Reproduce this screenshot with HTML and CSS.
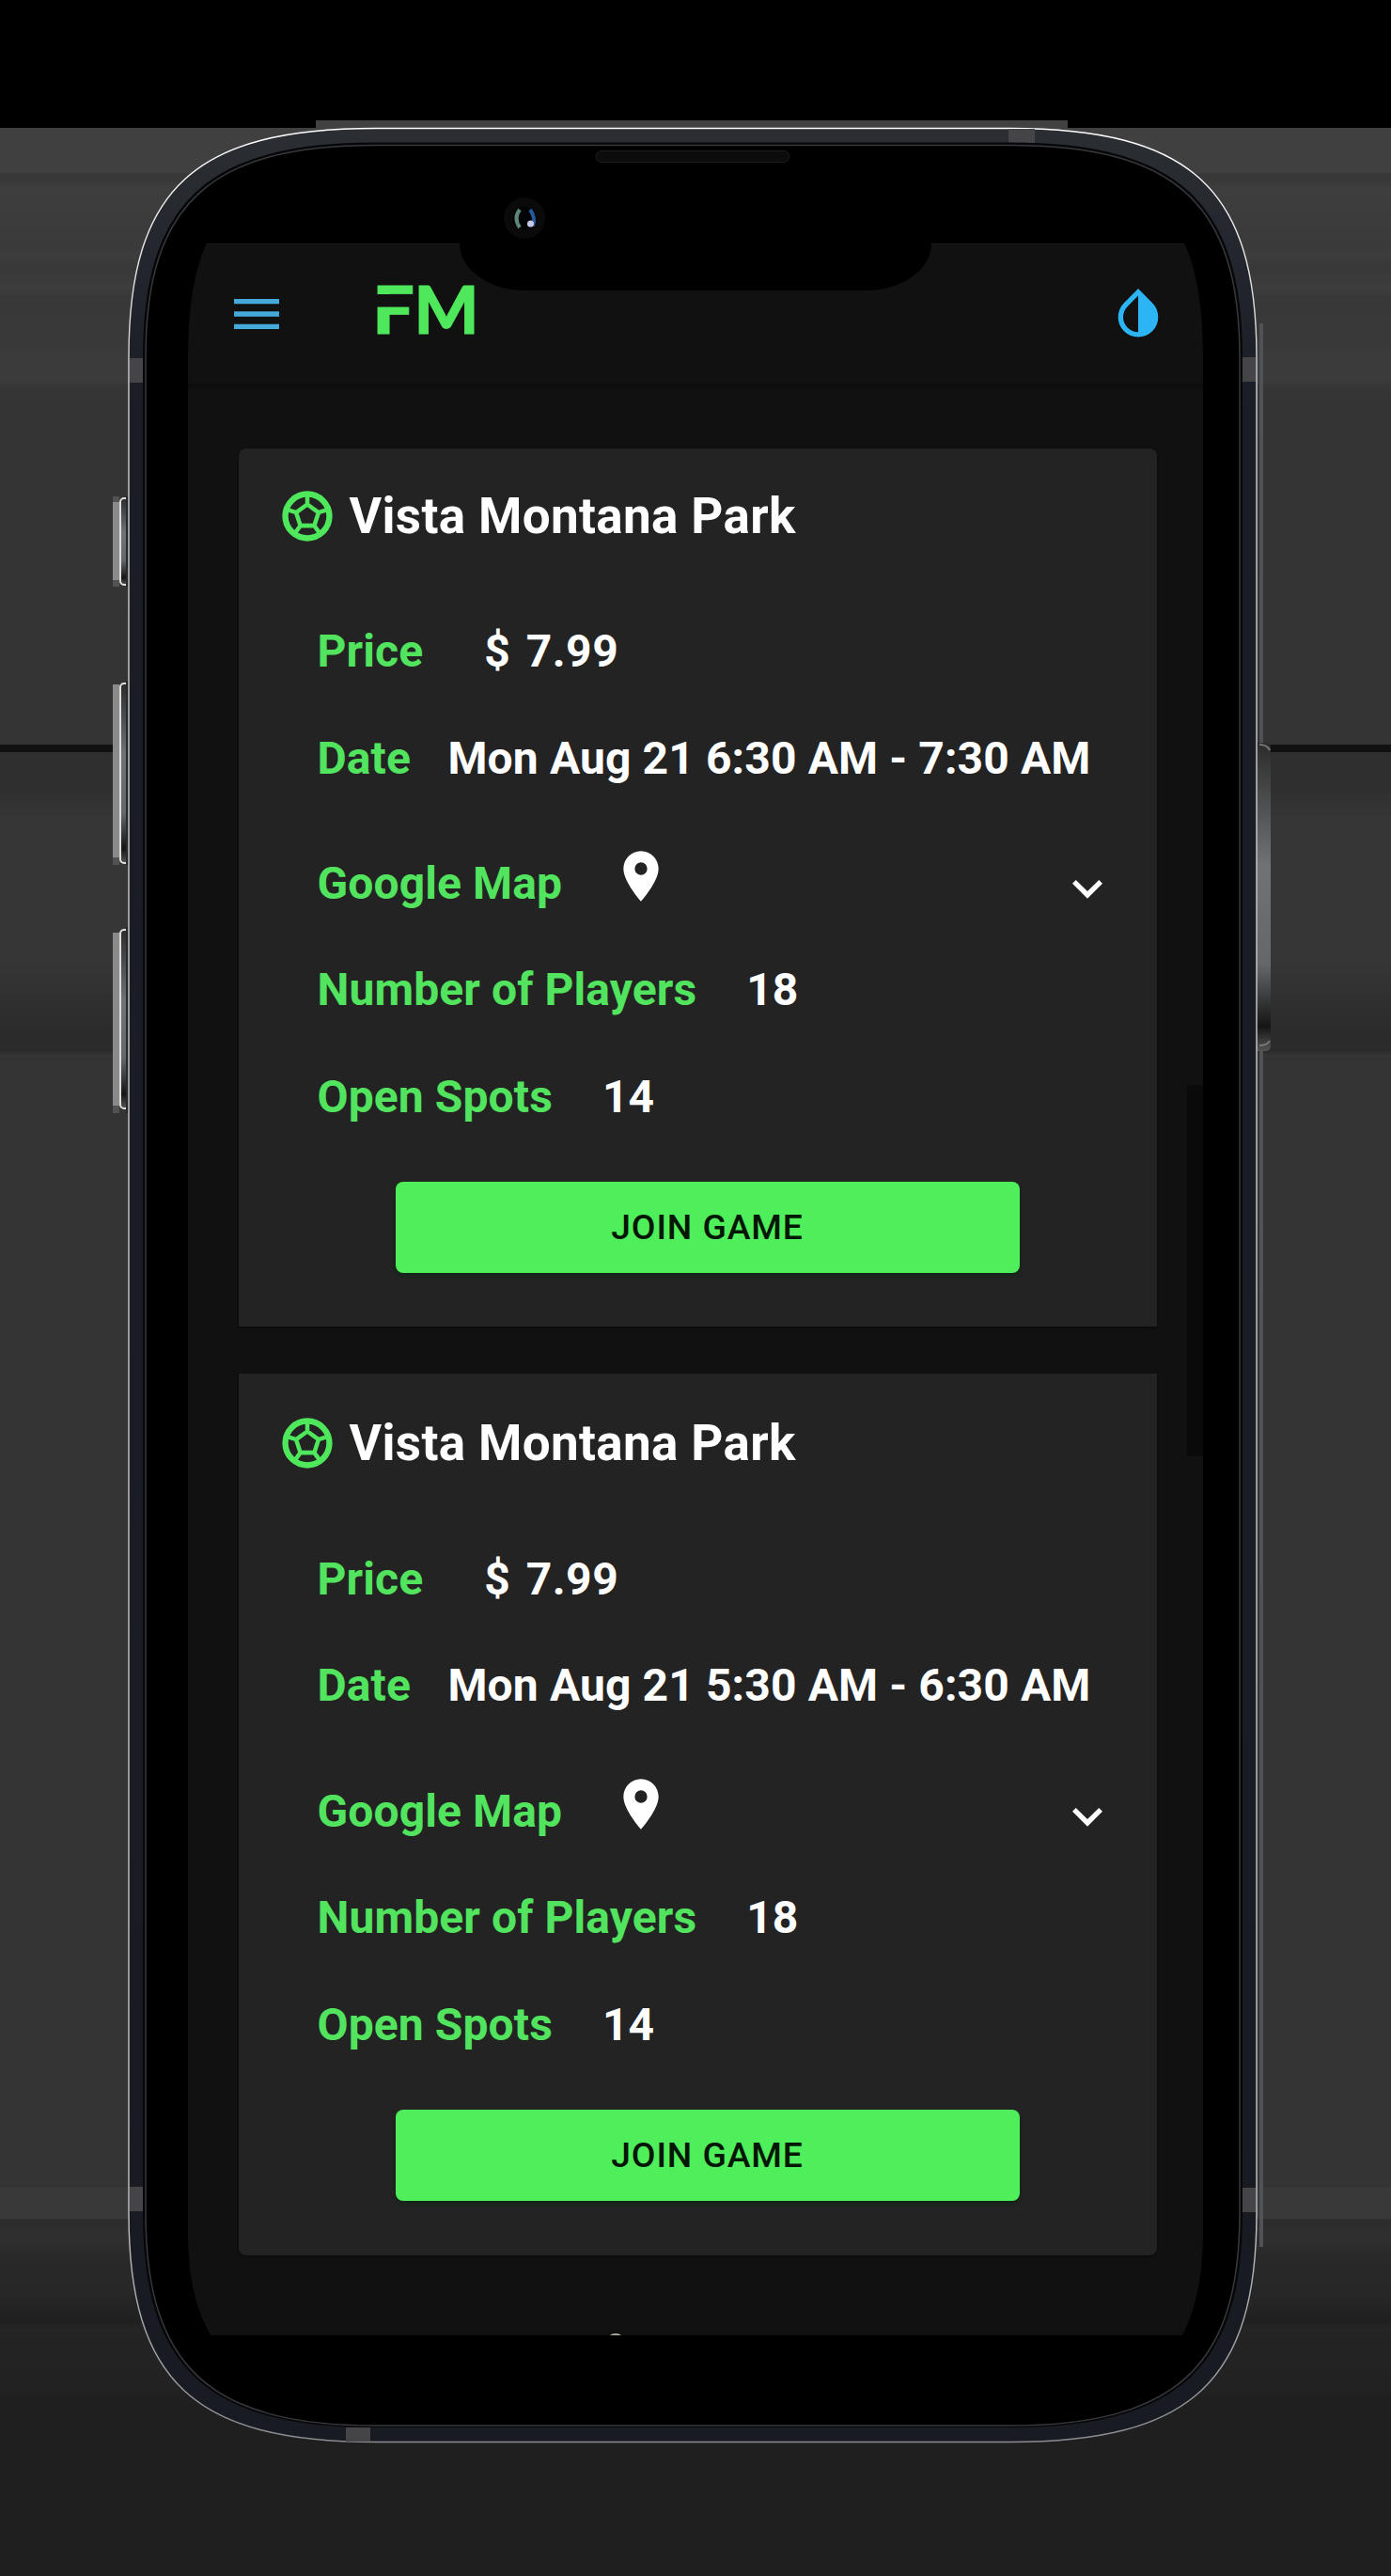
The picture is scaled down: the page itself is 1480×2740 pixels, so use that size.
FILE: index.html
```
<!DOCTYPE html>
<html lang="en">
<head>
<meta charset="utf-8">
<title>FM</title>
<link rel="stylesheet" href="styles.css">
</head>
<body>
<svg width="0" height="0" class="defs">
  <symbol id="ball" viewBox="0 0 24 24"><g fill="none" stroke="currentColor"><circle cx="12" cy="12" r="8.800" stroke-width="2.400"/><path stroke-width="1.700" d="M12 7.300l4.470 3.250-1.710 5.250H9.240L7.530 10.550zM12 7.300V3M16.470 10.550l4.090-1.330M14.760 15.800l2.530 3.480M9.240 15.800l-2.530 3.480M7.530 10.550L3.440 9.220"/></g></symbol>
  <symbol id="pin" viewBox="0 0 24 24"><path fill="currentColor" d="M12 2C8.13 2 5 5.13 5 9c0 5.25 7 13 7 13s7-7.75 7-13c0-3.87-3.13-7-7-7zm0 9.5a2.5 2.5 0 0 1 0-5 2.5 2.5 0 0 1 0 5z"/></symbol>
  <symbol id="expand" viewBox="0 0 24 24"><path fill="currentColor" d="M16.59 8.59 12 13.17 7.41 8.59 6 10l6 6 6-6z"/></symbol>
</svg>
<main class="stage">
  <svg class="frame" width="1480" height="2740" viewBox="0 0 1480 2740">
    <defs>
      <linearGradient id="btn" x1="0" y1="0" x2="0" y2="1"><stop offset="0" stop-color="#2c2c2c"/><stop offset=".4" stop-color="#707274"/><stop offset=".72" stop-color="#646668"/><stop offset=".92" stop-color="#151515"/><stop offset="1" stop-color="#555"/></linearGradient>
      <linearGradient id="rim" x1="0" y1="0" x2="0" y2="1"><stop offset="0" stop-color="#fff"/><stop offset=".1" stop-color="#d0d0d0"/><stop offset=".9" stop-color="#c4c4c4"/><stop offset="1" stop-color="#888b90"/></linearGradient>
      <linearGradient id="metal" x1="0" y1="0" x2="0" y2="1"><stop offset="0" stop-color="#2b2e33"/><stop offset=".12" stop-color="#1a1d25"/><stop offset="1" stop-color="#181b22"/></linearGradient>
    </defs>
    <path fill="#414141" d="M336 128h800v20H336z"/>
    <path fill="#505256" d="M1340 344h4v2046h-4z"/>
    <path fill="#8a8a8a" d="M120 534h7v83h-7zM120 728h7v184h-7zM120 992h7v184h-7z"/>
    <path fill="#525252" d="M120 528h7v6h-7zM120 617h7v7h-7zM120 912h7v8h-7zM120 1176h7v8h-7z"/>
    <g fill="url(#btn)" stroke="#dedede" stroke-width="2"><rect x="128" y="530" width="14" height="92" rx="4"/><rect x="128" y="727" width="14" height="191" rx="4"/><rect x="128" y="989" width="14" height="190" rx="4"/></g>
    <path fill="#26282b" d="M134 528h4v96h-4zM134 724h4v196h-4zM134 986h4v198h-4z"/>
    <rect x="1332" y="790" width="20" height="328" rx="5" fill="url(#btn)"/>
    <path d="M1340 792q8 0 11 6M1340 1112q8 0 11-5" stroke="#777" fill="none" stroke-width="2"/>
    <path fill="url(#metal)" stroke="url(#rim)" stroke-width="1.4" d="M137 380C137 200 208 136.500 400 136.500H1074C1266 136.500 1337 200 1337 380V2354C1337 2534 1266 2597.500 1074 2597.500H400C208 2597.500 137 2534 137 2354z"/>
    <path fill="#454547" d="M138 381h15v26h-15zM1322 380h14v26h-14zM1073 137h28v15h-28zM368 2582h26v15h-26zM138 2326h15v26h-15zM1322 2327h14v26h-14z"/>
    <path stroke="#06070a" stroke-width="4" d="M154 380C154 216 222 153.500 400 153.500H1074C1252 153.500 1320 216 1320 380V2354C1320 2518 1252 2580 1074 2580H400C222 2580 154 2518 154 2354z"/>
    <path stroke="#39393b" stroke-width="1.500" d="M155 380C155 217 223 154.500 400 154.500H1074C1251 154.500 1319 217 1319 380V2354C1319 2517 1251 2580 1074 2580H400C223 2580 155 2517 155 2354z"/>
    <rect x="634" y="160.500" width="206" height="12" rx="6" fill="#0c0c0c" stroke="#1d1d1d"/>
    <circle cx="558" cy="232" r="22" fill="#0a0a0a"/><circle cx="558" cy="232" r="12.500" fill="#030405"/>
    <path d="M553 223q-7 9 0 19" stroke="#5f8777" stroke-width="4" fill="none"/><path d="M564 223q6 8 3 17" stroke="#225a9c" stroke-width="4" fill="none"/><circle cx="564.500" cy="238" r="3.500" fill="#c9c9ea"/>
  </svg>

  <div class="screen">
    <header class="appbar">
      <svg class="icon menu" viewBox="0 0 24 24"><path fill="#45aadb" d="M3 18h18v-2H3v2zm0-5h18v-2H3v2zm0-7v2h18V6H3z"/></svg>
      <svg class="logo" width="104" height="56" viewBox="0 0 104 56"><g class="mark"><text x="-5" y="52.500" textLength="45" lengthAdjust="spacingAndGlyphs">F</text><text x="39.500" y="52.500" textLength="69" lengthAdjust="spacingAndGlyphs">M</text></g><rect x="-1" y="11" width="40" height="13.500" fill="#111"/></svg>
      <svg class="icon drop" viewBox="0 0 24 24"><path fill="#2cb4f4" d="M17.660 7.930L12 2.270 6.340 7.930c-3.120 3.120-3.120 8.190 0 11.310C7.900 20.800 9.950 21.580 12 21.580s4.100-.78 5.660-2.340c3.120-3.120 3.120-8.190 0-11.310zM12 19.590c-1.600 0-3.110-.62-4.240-1.760C6.620 16.690 6 15.190 6 13.590s.62-3.110 1.760-4.240L12 5.100v14.490z"/></svg>
    </header>
    <section class="games">
      <article class="card">
        <h2><svg class="icon"><use href="#ball"/></svg>Vista Montana Park</h2>
        <p><b>Price</b><span class="price">$ 7.99</span></p>
        <p><b>Date</b><span class="date">Mon Aug 21 6:30 AM - 7:30 AM</span></p>
        <p class="map"><b>Google Map</b><svg class="icon pin"><use href="#pin"/></svg><svg class="icon expand"><use href="#expand"/></svg></p>
        <p><b>Number of Players</b><span class="players">18</span></p>
        <p><b>Open Spots</b><span class="spots">14</span></p>
        <button>JOIN GAME</button>
      </article>
      <article class="card">
        <h2><svg class="icon"><use href="#ball"/></svg>Vista Montana Park</h2>
        <p><b>Price</b><span class="price">$ 7.99</span></p>
        <p><b>Date</b><span class="date">Mon Aug 21 5:30 AM - 6:30 AM</span></p>
        <p class="map"><b>Google Map</b><svg class="icon pin"><use href="#pin"/></svg><svg class="icon expand"><use href="#expand"/></svg></p>
        <p><b>Number of Players</b><span class="players">18</span></p>
        <p><b>Open Spots</b><span class="spots">14</span></p>
        <button>JOIN GAME</button>
      </article>
    </section>
    <div class="notch"></div>
    <div class="scrollbar"></div>
    <div class="peek"></div>
  </div>
</main>
</body>
</html>
```
FILE: styles.css
```
* { box-sizing: border-box; }
body { margin: 0; background: #1f1f1f; font-family: Roboto, sans-serif; }
.defs { position: absolute; }
.stage {
  position: relative;
  width: 1480px;
  height: 2740px;
  padding: 259px 200px 0;
  overflow: hidden;
  background: linear-gradient(#000 0 136px, #404040 136px 184px, #383838 184px 192px, #3e3e3e 200px, #3a3a3a 264px, #3d3d3d 270px, #383838 284px, #3d3d3d 308px, #383838 316px, #393939 360px, #3b3b3b 384px 406px, #363636 410px, #343434 430px 792px, #111 792px 800px, #2f2f2f 800px 840px, #363636 870px 1020px, #2b2b2b 1100px 1118px, #343434 1122px 2326px, #393939 2328px 2360px, #2c2c2c 2361px, #303030 2380px, #292929 2400px, #272727 2440px, #1f1f1f 2470px, #242424 2474px, #222 2540px, #1f1f1f 2552px);
}
.frame { position: absolute; left: 0; top: 0; }
.screen {
  position: relative;
  width: 1080px;
  height: 2225px;
  background: #111;
  color: #fff;
  clip-path: path("M20 0H1060C1075 30 1080 75 1080 125V2115C1080 2160 1073 2195 1058 2225H24C7 2195 0 2160 0 2115V125C0 75 5 30 20 0Z");
}
.icon { width: 64px; height: 64px; flex: none; }
.appbar {
  display: flex;
  align-items: flex-start;
  height: 149px;
  padding: 42px 37px 0 41px;
  border-top: 1px solid #1c1c1c;
  box-shadow: 0 2px 5px #0b0b0b;
}
.logo { margin-left: 96px; overflow: visible; }
.mark { font: 900 71px Lato, sans-serif; fill: #4fe85c; stroke: #4fe85c; stroke-width: 0.8px; }
.drop { margin-left: auto; margin-top: -1px; }
.games {
  display: flex;
  flex-direction: column;
  gap: 50px;
  padding: 69px 49.5px 0 54px;
}
.card {
  height: 934px;
  display: flex;
  flex-direction: column;
  background: #232323;
  border-radius: 8px 8px 0 0;
  box-shadow: 0 1px 3px #080808;
}
.card + .card { height: 938px; padding-top: 2px; border-radius: 0 0 8px 8px; }
.card h2 {
  display: flex;
  align-items: center;
  gap: 12.5px;
  height: 143px;
  margin: 0 0 16px;
  padding-left: 41px;
  font-size: 53px;
  font-weight: 700;
  letter-spacing: 0.35px;
}
.card + .card h2 { margin-bottom: 16.8px; }
.card h2 svg { color: #4fe85c; }
.card p {
  display: flex;
  align-items: center;
  height: 113.4px;
  margin: 0;
  padding-left: 83.5px;
  font-size: 48px;
  font-weight: 700;
  white-space: nowrap;
  letter-spacing: 0.12px;
}
.card b { color: #52e35f; font-weight: 700; letter-spacing: 0.1px; }
.card .map { height: 133.4px; padding-top: 20px; }
.price { margin-left: 65px; letter-spacing: 0.5px; word-spacing: 4px; }
.date { margin-left: 39.5px; }
.players, .spots { margin-left: 53px; }
.pin { margin: -15px 0 0 52px; }
.expand { margin: 12px 42px 0 auto; }
.card button {
  width: 664px;
  height: 97px;
  margin: 34px 0 0 166.5px;
  padding: 0;
  border: 0;
  border-radius: 8px;
  background: #4fee5b;
  color: #041704;
  font: 500 37.3px Roboto, sans-serif;
  letter-spacing: 0.9px;
  box-shadow: 0 3px 4px #132517;
}
.notch {
  position: absolute;
  left: 289px;
  top: 0;
  width: 502px;
  height: 50px;
  background: #000;
  border-radius: 0 0 70px 70px / 0 0 50px 50px;
}
.scrollbar { position: absolute; left: 1063px; top: 895px; width: 17px; height: 395px; background: #0a0a0a; }
.peek { position: absolute; left: 448px; top: 2223px; width: 14px; height: 8px; border-radius: 50%; background: #a9a99a; }
```
